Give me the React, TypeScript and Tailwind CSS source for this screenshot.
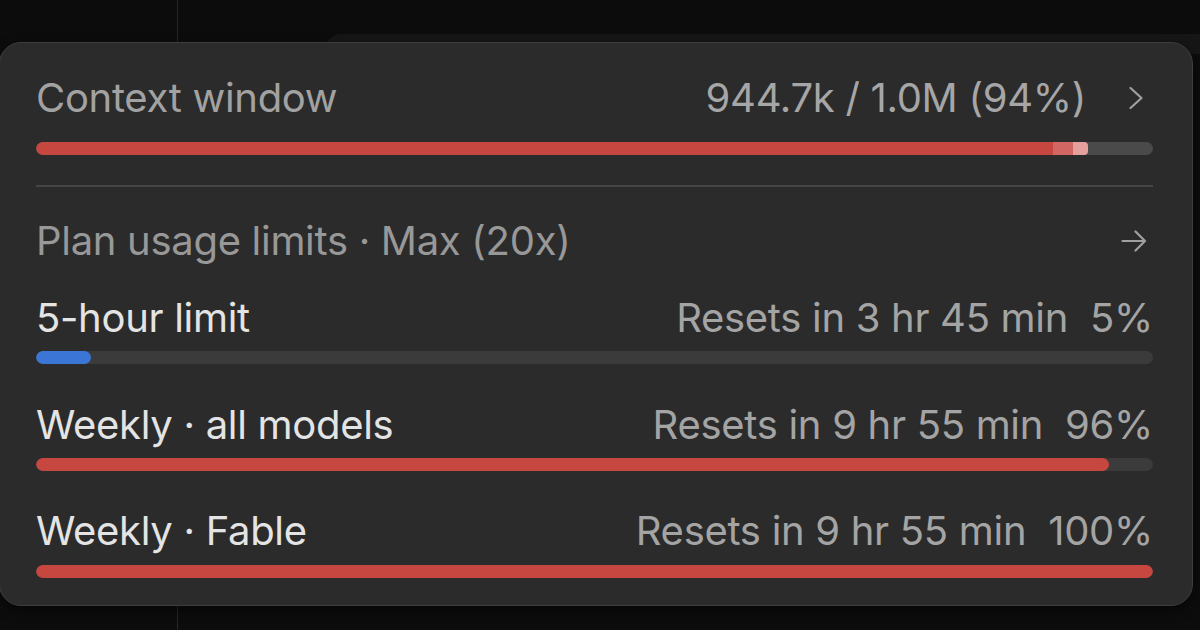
import React from 'react';

const font = { fontFamily: 'Inter, "Noto Sans", sans-serif', letterSpacing: '-0.3px' };

const UsageRow = ({ label, resets, pct }: { label: string; resets: string; pct: string }) => (
    <div className="flex h-[48px] items-center justify-between text-[40px] leading-none">
        <span className="text-[#e4e4e4]">{label}</span>
        <span className="text-[#a4a4a4] whitespace-pre">{resets}  {pct}</span>
    </div>
);

const Bar = ({ value, color }: { value: number; color: string }) => (
    <div className="h-[13px] w-full overflow-hidden rounded-full bg-[#3b3b3b]">
        <div className={`h-full rounded-full ${color}`} style={{ width: `${value}%` }} />
    </div>
);

const App = () => {
    return (
        <div className="relative h-[630px] w-[1200px] overflow-hidden bg-[#0c0c0c]" style={font}>
            <div className="absolute left-[177px] top-0 h-full w-px bg-[#262626]" />
            <div className="absolute left-[325px] right-0 top-[34px] h-[20px] rounded-tl-[16px] bg-[#161616]" />

            <div className="absolute left-[-1px] top-[42px] h-[564px] w-[1194px] rounded-[22px] border border-[#3e3e3e] bg-[#2b2b2b] pl-[36px] pr-[39px] pt-[31px] shadow-[0_4px_12px_rgba(0,0,0,0.5)]">
                <div className="flex h-[48px] items-center justify-between text-[40px] leading-none">
                    <span className="text-[#a2a2a2]">Context window</span>
                    <div className="flex items-center">
                        <span className="text-[#a6a6a6]">944.7k / 1.0M (94%)</span>
                        <svg className="ml-[42px] mr-[9px]" width="16" height="24" viewBox="0 0 16 24" fill="none" stroke="#a0a0a0" strokeWidth="2.2" strokeLinecap="round" strokeLinejoin="round">
                            <path d="M2.5 2 L13.5 12 L2.5 22" />
                        </svg>
                    </div>
                </div>

                <div className="mt-[20px] flex h-[13px] w-full overflow-hidden rounded-full bg-[#4a4a4a]">
                    <div className="h-full w-[1017px] rounded-l-full bg-[#c5473f]" />
                    <div className="h-full w-[20px] bg-[#d16662]" />
                    <div className="h-full w-[15px] rounded-r-[4px] bg-[#e3a09d]" />
                </div>

                <div className="mt-[30px] h-[2px] w-full bg-[#454545]" />

                <div className="mt-[30px] flex h-[48px] items-center justify-between text-[40px] leading-none">
                    <span className="text-[#989898]">Plan usage limits · Max (20x)</span>
                    <svg className="mr-[6px]" width="26" height="22" viewBox="0 0 26 22" fill="none" stroke="#a0a0a0" strokeWidth="2.2" strokeLinecap="round" strokeLinejoin="round">
                        <path d="M1.5 11 H24 M14.5 1.5 L24 11 L14.5 20.5" />
                    </svg>
                </div>

                <div className="mt-[29px]">
                    <UsageRow label="5-hour limit" resets="Resets in 3 hr 45 min" pct="5%" />
                </div>
                <div className="mt-[9px]">
                    <Bar value={4.9} color="bg-[#3b76d6]" />
                </div>

                <div className="mt-[37px]">
                    <UsageRow label="Weekly · all models" resets="Resets in 9 hr 55 min" pct="96%" />
                </div>
                <div className="mt-[9px]">
                    <Bar value={96.1} color="bg-[#c5473f]" />
                </div>

                <div className="mt-[36px]">
                    <UsageRow label="Weekly · Fable" resets="Resets in 9 hr 55 min" pct="100%" />
                </div>
                <div className="mt-[10px]">
                    <Bar value={100} color="bg-[#c5473f]" />
                </div>
            </div>
        </div>
    );
};

export default App;
